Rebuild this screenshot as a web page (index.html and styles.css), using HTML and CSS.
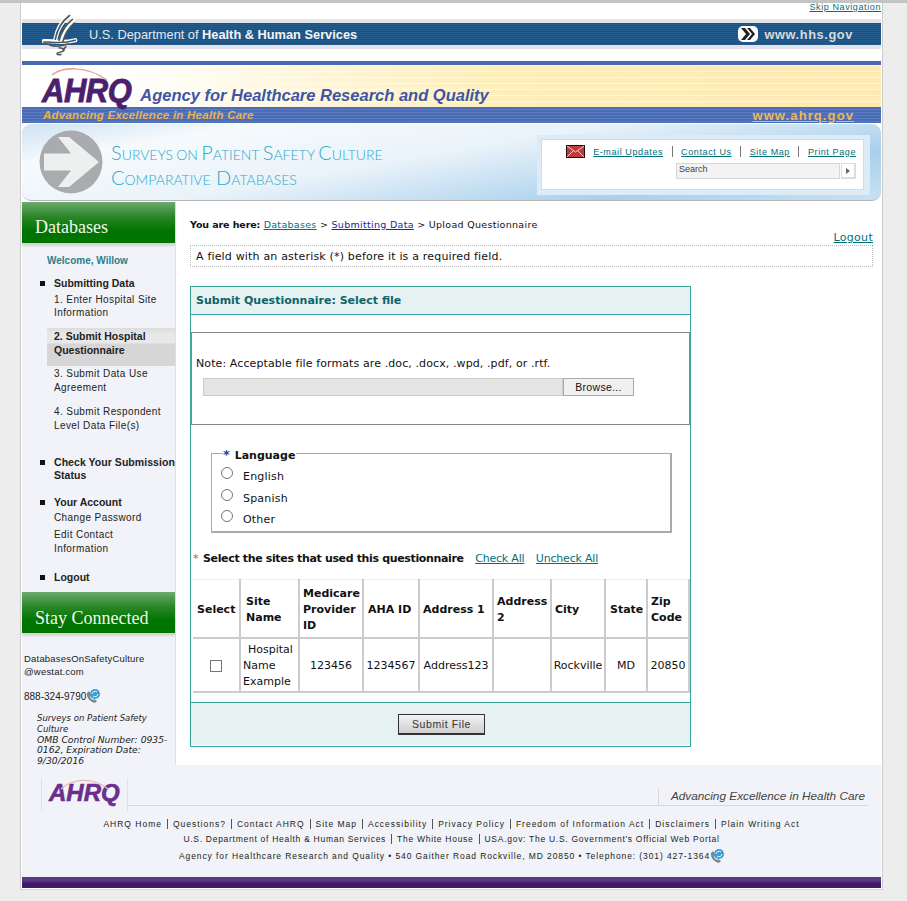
FILE: index.html
```html
<!DOCTYPE html>
<html lang="en">
<head>
  <meta charset="UTF-8">
  <meta name="viewport" content="width=device-width, initial-scale=1.0">
  <title>Surveys on Patient Safety Culture - Submit Questionnaire</title>
  <link rel="stylesheet" href="styles.css">
</head>
<body>
  <div class="page">
    <div class="skip-row"><a href="#main">Skip Navigation</a></div>

    <!-- HHS bar -->
    <div class="hhs-wrap">
      <div class="hhs-bar">
        <svg class="hhs-eagle" viewBox="0 0 40 46" width="38" height="45">
          <g fill="none" stroke="#fff" stroke-width="4.4" stroke-linecap="round"><path d="M29 3C21 9 16 17 14 28"/><path d="M33 8C26 14 22 21 20 30"/><path d="M2 30C9 29 19 33 35 29"/></g>
          <g fill="none" stroke="#4d565d" stroke-width="1.7" stroke-linecap="round">
            <path d="M29 3C21 9 16 17 14 28"/><path d="M32 7C25 13 20 21 18 29"/><path d="M34 11C28 16 24 23 22 30"/><path d="M2 31C9 30 19 34 35 29"/><path d="M8 34C14 36 22 35 28 33"/><path d="M18 37C24 38 26 40 18 42C14 43 16 45 20 44"/><path d="M22 39L25 36"/>
          </g>
        </svg>
        <div class="hhs-name">U.S. Department of <b>Health &amp; Human Services</b></div>
        <div class="hhs-url">
          <svg viewBox="0 0 20 16" width="20" height="16"><rect width="20" height="16" rx="5" fill="#fff"/><path d="M3 2h4l5 6-5 6H3l5-6zM9 2h3l5 6-5 6H9l5-6z" fill="#222"/></svg>
          <span>www.hhs.gov</span>
        </div>
      </div>
    </div>

    <!-- AHRQ bar -->
    <div class="ahrq-top">
      <svg class="ahrq-arc" viewBox="0 0 56 14" width="56" height="14"><path d="M0 8C10 0 34-2 55 13" fill="none" stroke="#ec9f9a" stroke-width="1.5"/></svg>
      <div class="ahrq-logo">AHRQ</div>
      <div class="ahrq-name">Agency for Healthcare Research and Quality</div>
    </div>
    <div class="ahrq-band">
      <span>Advancing Excellence in Health Care</span>
      <a href="#">www.ahrq.gov</a>
    </div>

    <!-- Banner -->
    <div class="banner">
      <svg class="banner-arrow" viewBox="0 0 64 64" width="64" height="64"><circle cx="32" cy="32" r="31.5" fill="#a9abae"/><path d="M5 23.500H32L19 7H30L60 32 30 57H19L32 40.500H5z" fill="#eef0f0"/></svg>
      <div class="banner-title">
        <div class="title-one">Surveys on Patient Safety Culture</div>
        <div>Comparative Databases</div>
      </div>
      <div class="tools-box">
        <div class="tools-inner">
          <div class="tools-links">
            <svg class="mail-icon" viewBox="0 0 19 13" width="19" height="13"><rect x=".5" y=".5" width="18" height="12" fill="#c0393b" stroke="#111"/><path d="M1 1l8.500 6L18 1M1 12l6-6M18 12l-6-6" fill="none" stroke="#f3d0d0"/></svg>
            <a href="#">E-mail Updates</a><i></i>
            <a href="#">Contact Us</a><i></i>
            <a href="#">Site Map</a><i></i>
            <a href="#">Print Page</a>
          </div>
          <div class="search-row">
            <div class="search-input">Search</div>
            <div class="search-btn"><span></span></div>
          </div>
        </div>
      </div>
    </div>

    <div class="columns">
      <!-- Sidebar -->
      <div class="sidebar">
        <h2 class="side-head">Databases</h2>
        <div class="welcome">Welcome, Willow</div>
        <ul class="side-nav">
          <li class="nav-first">Submitting Data
            <a class="sub sub-tight" href="#">1. Enter Hospital Site Information</a>
            <a class="sub current" href="#">2. Submit Hospital Questionnaire</a>
            <a class="sub sub-after" href="#">3. Submit Data Use Agreement</a>
            <a class="sub sub-last" href="#">4. Submit Respondent Level Data File(s)</a>
          </li>
          <li class="nav-check">Check Your Submission<br>Status</li>
          <li class="nav-account">Your Account
            <a class="sub sub-pass" href="#">Change Password</a>
            <a class="sub sub-edit" href="#">Edit Contact<br>Information</a>
          </li>
          <li class="nav-logout">Logout</li>
        </ul>
        <h2 class="side-head stay">Stay Connected</h2>
        <div class="contact-mail">DatabasesOnSafetyCulture<br>@westat.com</div>
        <div class="contact-phone">888-324-9790<svg class="phone-icon" viewBox="0 0 14 14" width="14" height="14"><path d="M1 4C0 8 4 13 9 14l2-2-3-2-1 1C5 10 4 8 4 6l1-1-2-3z" fill="#7c8a8f"/><circle cx="9" cy="5" r="5" fill="#3b9ad6"/><path d="M6 5a3 3 0 0 1 5-2M12 5a3 3 0 0 1-5 2" fill="none" stroke="#fff"/></svg></div>
        <div class="omb"><span>Surveys on Patient Safety Culture</span><br>OMB Control Number: 0935-0162, Expiration Date: 9/30/2016</div>
      </div>

      <!-- Main content -->
      <div class="main" id="main">
        <div class="crumbs"><b>You are here:</b> <a href="#">Databases</a> &gt; <a class="blue" href="#">Submitting Data</a> &gt; Upload Questionnaire</div>
        <div class="logout-row"><a href="#">Logout</a></div>
        <div class="required-note">A field with an asterisk (*) before it is a required field.</div>

        <div class="panel">
          <div class="panel-head">Submit Questionnaire: Select file</div>
          <div class="file-box">
            <p>Note: Acceptable file formats are .doc, .docx, .wpd, .pdf, or .rtf.</p>
            <div class="file-row">
              <div class="file-field"></div>
              <div class="file-btn">Browse...</div>
            </div>
          </div>

          <fieldset class="language">
            <legend><em>*</em> Language</legend>
            <label class="radio-row"><input type="radio" name="lang"><span>English</span></label>
            <label class="radio-row"><input type="radio" name="lang"><span>Spanish</span></label>
            <label class="radio-row"><input type="radio" name="lang"><span>Other</span></label>
          </fieldset>

          <div class="sites-line">
            <em>*</em> <b>Select the sites that used this questionnaire</b>
            <a href="#">Check All</a>
            <a href="#">Uncheck All</a>
          </div>

          <table class="sites">
            <thead>
              <tr>
                <th class="c-select">Select</th>
                <th class="c-name">Site Name</th>
                <th class="c-med">Medicare Provider ID</th>
                <th class="c-aha">AHA ID</th>
                <th class="c-addr">Address 1</th>
                <th class="c-addr2">Address 2</th>
                <th class="c-city">City</th>
                <th class="c-state">State</th>
                <th class="c-zip">Zip Code</th>
              </tr>
            </thead>
            <tbody>
              <tr>
                <td class="center"><span class="checkbox"></span></td>
                <td class="site-name">Hospital Name Example</td>
                <td class="center">123456</td>
                <td class="center">1234567</td>
                <td class="center">Address123</td>
                <td></td>
                <td class="center">Rockville</td>
                <td class="center">MD</td>
                <td class="center">20850</td>
              </tr>
            </tbody>
          </table>

          <div class="panel-foot"><button class="submit-btn" type="button">Submit File</button></div>
        </div>
      </div>
    </div>

    <!-- Footer -->
    <div class="footer">
      <div class="foot-top">
        <div class="foot-logo">
          <svg class="foot-arc" viewBox="0 0 50 12" width="50" height="12"><path d="M1 11C12 1 32-2 48 11" fill="none" stroke="#eabcae" stroke-width="1.2"/></svg>
          <div class="ahrq-logo small">AHRQ</div>
        </div>
        <div class="foot-rule"><span>Advancing Excellence in Health Care</span></div>
      </div>
      <div class="foot-links line-one">
        <a href="#">AHRQ Home</a><a href="#">Questions?</a><a href="#">Contact AHRQ</a><a href="#">Site Map</a><a href="#">Accessibility</a><a href="#">Privacy Policy</a><a href="#">Freedom of Information Act</a><a href="#">Disclaimers</a><a href="#">Plain Writing Act</a>
      </div>
      <div class="foot-links line-two">
        <a href="#">U.S. Department of Health &amp; Human Services</a><a href="#">The White House</a><a href="#">USA.gov: The U.S. Government's Official Web Portal</a>
      </div>
      <div class="foot-address">Agency for Healthcare Research and Quality &bull; 540 Gaither Road Rockville, MD 20850 &bull; Telephone: (301) 427-1364<svg class="phone-icon" viewBox="0 0 14 14" width="14" height="14"><path d="M1 4C0 8 4 13 9 14l2-2-3-2-1 1C5 10 4 8 4 6l1-1-2-3z" fill="#7c8a8f"/><circle cx="9" cy="5" r="5" fill="#3b9ad6"/><path d="M6 5a3 3 0 0 1 5-2M12 5a3 3 0 0 1-5 2" fill="none" stroke="#fff"/></svg></div>
    </div>
    <div class="purple-bar"></div>
  </div>
</body>
</html>
```

FILE: styles.css
```css
* {
  margin: 0;
  padding: 0;
  box-sizing: border-box;
}

html, body {
  height: 901px;
  overflow: hidden;
}

body {
  background: #ededed;
  border-top: 3px solid #c4c4c4;
  font-family: "DejaVu Sans", Verdana, sans-serif;
  font-size: 11px;
  color: #111;
}

a {
  color: #00707a;
}

.page {
  width: 863px;
  height: 887px;
  margin-left: 20px;
  background: #fff;
  border-left: 1px solid #ccc;
  border-right: 1px solid #ccc;
  border-bottom: 1px solid #d4d4d4;
  padding: 0 1px;
}

/* top rows */
.skip-row {
  height: 16px;
  text-align: right;
  font-family: "Liberation Sans", Arial, sans-serif;
  font-size: 9px;
  letter-spacing: 0.6px;
  line-height: 9px;
}

.hhs-wrap {
  height: 30px;
  padding: 4px 0;
  background: #e4e4e6;
}

.hhs-bar {
  display: flex;
  align-items: center;
  height: 22px;
  padding: 0 28px 0 20px;
  color: #e8e8e8;
  background: repeating-linear-gradient(#1b5285 0, #1b5285 1px, #245c8e 1px, #245c8e 2px);
  font-family: "Liberation Sans", Arial, sans-serif;
}

.hhs-eagle {
  flex: none;
  margin-right: 9px;
}

.hhs-name {
  flex: 1;
  font-size: 12.800px;
}

.hhs-name b {
  color: #f4f4f4;
}

.hhs-url {
  display: flex;
  align-items: center;
  gap: 6px;
  font-size: 12.800px;
  font-weight: bold;
  letter-spacing: 0.6px;
  color: #d8dadd;
}

.ahrq-top {
  position: relative;
  display: flex;
  align-items: flex-end;
  height: 46px;
  margin-top: 12px;
  padding: 0 0 3px 20px;
  border-top: 4px solid #4a68b6;
  background:
    repeating-linear-gradient(rgba(255, 255, 255, 0.55) 0, rgba(255, 255, 255, 0.55) 1px, transparent 1px, transparent 6px),
    linear-gradient(90deg, #fff 10%, #fdeebc 55%, #fde9b4);
}

.ahrq-arc {
  position: absolute;
  left: 30px;
  top: 2px;
}

.ahrq-logo {
  font-family: "Liberation Sans", Arial, sans-serif;
  font-size: 31px;
  line-height: 24px;
  font-weight: bold;
  font-style: italic;
  color: #4c1e6e;
  letter-spacing: -0.5px;
  -webkit-text-stroke: 0.8px #4c1e6e;
  transform: scaleY(1.1);
  transform-origin: left bottom;
}

.ahrq-name {
  margin: 0 0 -2px 9px;
  font-family: "Liberation Sans", Arial, sans-serif;
  font-size: 16.500px;
  line-height: 22px;
  font-weight: bold;
  font-style: italic;
  color: #3f55a6;
}

.ahrq-band {
  display: flex;
  justify-content: space-between;
  align-items: center;
  height: 16px;
  padding: 0 27px 0 21px;
  background: repeating-linear-gradient(#4a6cb4 0, #4a6cb4 2px, #5b7cc0 2px, #5b7cc0 3px);
  font-family: "Liberation Sans", Arial, sans-serif;
  font-weight: bold;
  color: #eeb24c;
}

.ahrq-band span {
  font-size: 11.500px;
  font-style: italic;
  letter-spacing: 0.25px;
}

.ahrq-band a {
  font-size: 13px;
  letter-spacing: 1.1px;
  color: #f0b752;
}

.banner {
  display: flex;
  align-items: center;
  height: 77px;
  margin-top: 1px;
  padding: 0 11px 0 17px;
  border-radius: 9px;
  border-bottom: 1px solid #b4b4b4;
  background: linear-gradient(170deg, #cfe2f2 0, #f6fafd 18%, #eaf3fa 45%, #a9d0ec 78%, #c9e1f3 100%);
}

.banner-arrow {
  flex: none;
}

.banner-title {
  flex: 1;
  margin: 6px 0 0 8px;
  font-family: "Lato", "Open Sans", sans-serif;
  font-variant: small-caps;
  font-weight: 300;
  font-size: 20px;
  line-height: 25.500px;
  color: #2aa9cb;
}

.title-one {
  word-spacing: -2.200px;
}

.tools-box {
  flex: none;
  width: 333px;
  height: 60px;
  margin-top: 6px;
  padding: 4px 6px 4px 4px;
  background: #dcebf6;
}

.tools-inner {
  height: 51px;
  padding: 6px 7px 0;
  background: #fff;
  border: 1px solid #d8dadd;
  font-family: "Liberation Sans", Arial, sans-serif;
  font-size: 9px;
  letter-spacing: 0.6px;
}

.tools-links {
  display: flex;
  justify-content: flex-end;
  align-items: center;
  height: 11px;
}

.tools-links i {
  width: 1px;
  height: 11px;
  margin: 0 8.500px;
  background: #777;
}

.mail-icon {
  margin-right: 8px;
}

.search-row {
  display: flex;
  justify-content: flex-end;
  margin-top: 6px;
}

.search-input {
  width: 164px;
  height: 16px;
  padding-left: 2px;
  background: #f3f3f3;
  border: 1px solid #d6d6d6;
  line-height: 11px;
  font-size: 9px;
  letter-spacing: 0;
  color: #444;
}

.search-btn {
  display: flex;
  align-items: center;
  justify-content: center;
  width: 15px;
  height: 16px;
  margin-left: 1px;
  border: 1px solid #ddd;
  border-width: 1px 2px 2px 1px;
}

.search-btn span {
  border-left: 4px solid #666;
  border-top: 3px solid transparent;
  border-bottom: 3px solid transparent;
}

.columns {
  display: flex;
  height: 563px;
  margin-top: 1px;
}

/* sidebar */
.sidebar {
  flex: none;
  width: 154px;
  background: #f1f3f8;
  border-right: 1px solid #dcdfe4;
  font-family: "Liberation Sans", Arial, sans-serif;
  color: #222;
}

.side-head {
  height: 41px;
  padding: 7.500px 0 0 13px;
  background: linear-gradient(#6cab6c 0, #2b872b 35%, #007400 70%);
  box-shadow: 0 3px 2px #d4d4d4;
  font-family: "Liberation Serif", Georgia, serif;
  font-weight: normal;
  font-size: 18px;
  line-height: 34px;
  color: #f3f7f0;
}

.side-head.stay {
  padding-top: 9px;
}

.welcome {
  margin: 11px 0 0 25px;
  font-weight: bold;
  font-size: 10px;
  line-height: 13px;
  color: #2c7f88;
}

.side-nav {
  list-style: none;
  margin-top: 10px;
  font-weight: bold;
  font-size: 10.500px;
  line-height: 13px;
}

.side-nav li {
  position: relative;
  padding-left: 32px;
}

.side-nav li::before {
  content: "";
  position: absolute;
  left: 18px;
  top: 4px;
  width: 5px;
  height: 5px;
  background: #111;
}

.sub {
  display: block;
  margin-top: 8px;
  font-weight: normal;
  font-size: 10px;
  letter-spacing: 0.4px;
  line-height: 14px;
  color: #222;
  text-decoration: none;
}

.sub-tight {
  margin-top: 3px;
  line-height: 13px;
}

.sub.current {
  margin: 9px 0 0 -7px;
  height: 38px;
  padding: 1px 10px 0 7px;
  background: linear-gradient(#dcdcdc 0, #e8e8e8 6px, #e8e8e8 15px, #d6d6d6 16px);
  font-weight: bold;
  font-size: 10.500px;
  letter-spacing: 0;
}

.sub-after {
  margin-top: 1px;
}

.sub-last {
  margin-top: 10px;
}

.nav-check {
  margin-top: 23px;
  letter-spacing: 0.05px;
  white-space: nowrap;
}

.nav-account {
  margin-top: 14px;
}

.sub-pass {
  margin-top: 2px;
  line-height: 13px;
}

.sub-edit {
  margin-top: 4px;
}

.nav-logout {
  margin-top: 15px;
}

.side-nav + .side-head {
  margin-top: 8px;
}

.contact-mail {
  margin: 19px 0 0 2px;
  font-size: 9.500px;
  line-height: 13px;
  letter-spacing: 0.2px;
}

.contact-phone {
  display: flex;
  align-items: center;
  margin: 11px 0 0 2px;
  font-size: 10px;
  height: 14px;
}

.omb {
  margin: 10px 0 0 15px;
  padding-right: 4px;
  font-family: "DejaVu Sans", Verdana, sans-serif;
  font-style: italic;
  font-size: 9.200px;
  line-height: 10.800px;
}

.omb span {
  font-size: 8.500px;
}

/* main column */
.main {
  flex: 1;
  padding: 16px 8px 0 14px;
}

.crumbs {
  font-size: 9.500px;
  line-height: 13px;
  letter-spacing: 0.3px;
}

.crumbs b {
  letter-spacing: -0.1px;
}

.crumbs .blue {
  color: #14289a;
}

.logout-row {
  text-align: right;
  font-size: 11px;
  line-height: 13px;
  letter-spacing: 0.3px;
}

.required-note {
  height: 22px;
  margin-top: 1px;
  padding-left: 5px;
  border: 1px dotted #bbb;
  line-height: 22px;
  letter-spacing: 0.18px;
}

.panel {
  width: 501px;
  height: 461px;
  margin-top: 19px;
  border: 1px solid #3aa5a0;
}

.panel-head {
  height: 28px;
  padding-left: 5px;
  background: #e6f2f2;
  border-bottom: 1px solid #3aa5a0;
  font-weight: bold;
  line-height: 27px;
  color: #0d6468;
}

.file-box {
  height: 93px;
  margin-top: 17px;
  padding: 24px 0 0 4px;
  border: 1px solid #888;
  letter-spacing: 0.1px;
}

.file-box p {
  line-height: 14px;
}

.file-row {
  display: flex;
  margin: 7px 0 0 7px;
}

.file-field {
  width: 360px;
  height: 18px;
  background: #e4e4e4;
  border: 1px solid #ccc;
}

.file-btn {
  width: 71px;
  height: 18px;
  background: #f0f0f0;
  border: 1px solid #aaa;
  text-align: center;
  font-family: "Liberation Sans", Arial, sans-serif;
  font-size: 10.500px;
  letter-spacing: 0.3px;
  line-height: 16px;
}

.language {
  width: 461px;
  height: 89px;
  margin: 19px 0 0 20px;
  padding: 4px 0 0 9px;
  border: 1px solid #aaa;
  border-width: 1px 2px 2px 1px;
}

.language legend {
  margin-left: 2px;
  padding: 4px 1px 0 0;
  font-weight: bold;
  line-height: 14px;
}

.language em,
.sites-line em {
  font-style: normal;
  color: #1b3f9a;
}

.language em {
  font-size: 13px;
  line-height: 13px;
  margin-right: 1px;
}

.radio-row {
  display: flex;
  align-items: flex-start;
  height: 21.500px;
}

.radio-row input {
  width: 12px;
  height: 12px;
  margin: 0 10px 0 0;
  appearance: none;
  border: 1px solid #777;
  border-radius: 50%;
  background: #fff;
}

.radio-row span {
  padding-top: 3px;
  line-height: 14px;
  letter-spacing: 0.2px;
}

.sites-line {
  margin: 19px 0 0 2px;
  line-height: 14px;
}

.sites-line em {
  color: #b5651d;
}

.sites-line b {
  margin-left: 1px;
  letter-spacing: -0.35px;
}

.sites-line a {
  margin-left: 8px;
  letter-spacing: -0.2px;
}

.sites {
  width: 496px;
  margin: 13px 0 0 2px;
  table-layout: fixed;
  border-collapse: collapse;
}

.sites th, .sites td {
  border: 2px solid #ccc;
  border-top-width: 0;
  border-left-width: 0;
  padding: 3px 3px 0;
  line-height: 16px;
}

.sites th {
  height: 58px;
  text-align: left;
  font-size: 11px;
}

.sites td {
  height: 54px;
}

.sites thead tr {
  border-top: 1px solid #eee;
}

.sites .center {
  text-align: center;
  padding: 3px 0 0;
}

.sites td.site-name {
  padding-left: 2px;
  text-indent: 5px;
}

.c-select { width: 47px; }
.c-name { width: 59px; }
.c-med { width: 64px; }
.c-aha { width: 56px; }
.c-addr { width: 74px; }
.c-addr2 { width: 58px; }
.c-city { width: 54px; }
.c-state { width: 42px; }
.c-zip { width: 42px; }

.sites th.c-select, .sites th.c-aha, .sites th.c-state {
  padding-left: 4px;
}

.sites th.c-name {
  padding-left: 5px;
}

.checkbox {
  display: inline-block;
  width: 12px;
  height: 12px;
  vertical-align: middle;
  border: 1px solid #777;
}

.panel-foot {
  height: 43px;
  margin-top: 9px;
  padding-top: 11px;
  background: #e6f2f2;
  border-top: 1px solid #3aa5a0;
  text-align: center;
}

.submit-btn {
  width: 87px;
  height: 21px;
  margin-left: 2px;
  background: linear-gradient(#f2f2f2, #cfcfcf);
  border: 1px solid #333;
  border-width: 1px 1px 2px 1px;
  font-family: "Liberation Sans", Arial, sans-serif;
  font-size: 10.500px;
  letter-spacing: 0.6px;
  color: #333;
}

/* footer */
.footer {
  height: 112px;
  padding-top: 13px;
  background: #f1f3f8;
  font-family: "Liberation Sans", Arial, sans-serif;
  font-size: 8.500px;
  letter-spacing: 0.9px;
  text-align: center;
}

.foot-top {
  display: flex;
  align-items: flex-start;
  margin: 0 13px 0 19px;
  height: 33px;
  letter-spacing: 0;
}

.foot-logo {
  position: relative;
  flex: none;
  width: 87px;
  height: 33px;
  padding: 6px 0 0 7px;
  border: 1px solid #e2e2e2;
  border-width: 0 1px;
  text-align: left;
}

.foot-arc {
  position: absolute;
  left: 18px;
  top: 0;
}

.ahrq-logo.small {
  font-size: 24px;
  line-height: 18px;
  letter-spacing: 0;
  color: #6c2e8c;
  -webkit-text-stroke: 0.6px #6c2e8c;
  transform: none;
}

.foot-rule {
  flex: 1;
  display: flex;
  justify-content: flex-end;
  height: 28px;
  padding-top: 11px;
  border-bottom: 1px solid #d8d8d8;
}

.foot-rule span {
  padding: 1px 3px 0 12px;
  border-left: 1px solid #d8d8d8;
  font-style: italic;
  font-size: 11.800px;
  line-height: 12px;
  color: #444;
}

.foot-links {
  height: 15px;
  line-height: 13px;
}

.footer .line-one {
  margin-top: 7px;
  letter-spacing: 0.99px;
}

.footer .line-two {
  letter-spacing: 0.72px;
}

.foot-links a {
  padding: 0 5px;
  border-left: 1px solid #555;
  color: #222;
  text-decoration: none;
}

.foot-links a:first-child {
  border-left: 0;
}

.foot-address {
  display: flex;
  justify-content: center;
  align-items: center;
  height: 14px;
  margin-top: 1px;
  color: #222;
}

.purple-bar {
  height: 11px;
  background: linear-gradient(#5b397f 0, #5b397f 4px, #43196b 6px);
}
```
